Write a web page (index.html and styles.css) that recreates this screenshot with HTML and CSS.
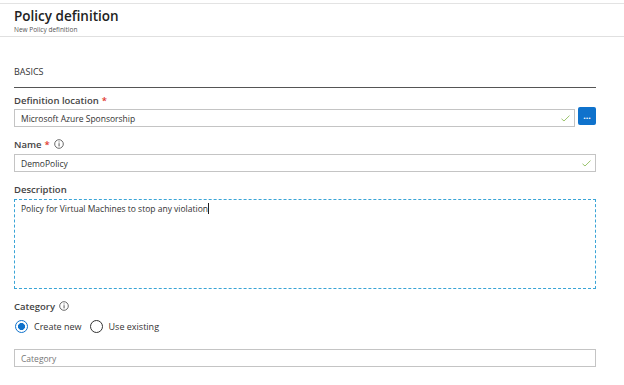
FILE: index.html
```html
<!DOCTYPE html>
<html lang="en">
<head>
  <meta charset="UTF-8">
  <meta name="viewport" content="width=device-width, initial-scale=1.0">
  <title>Policy definition</title>
  <link rel="stylesheet" href="styles.css">
</head>
<body>
  <!-- Cabeçalho -->
  <div class="header">
    <h1>Policy definition</h1>
    <p class="subtitle">New Policy definition</p>
  </div>

  <div class="form">
    <div class="section-title">BASICS</div>

    <!-- Local da definição -->
    <label class="label label-first">Definition location <span class="req">*</span></label>
    <div class="input-row">
      <div class="input input-short">
        <span>Microsoft Azure Sponsorship</span>
        <svg class="check" width="9" height="7" viewBox="0 0 9 7"><path d="M0.5 3.8 L3 6 L8.5 0.6" fill="none" stroke="#9cc46e" stroke-width="1"/></svg>
      </div>
      <button class="browse">...</button>
    </div>

    <!-- Nome -->
    <label class="label">Name <span class="req">*</span>
      <svg class="info" width="10" height="10" viewBox="0 0 10 10"><circle cx="5" cy="5" r="4.3" fill="none" stroke="#444" stroke-width="0.8"/><rect x="4.6" y="4.2" width="0.9" height="3.2" fill="#444"/><rect x="4.6" y="2.5" width="0.9" height="0.9" fill="#444"/></svg>
    </label>
    <div class="input">
      <span>DemoPolicy</span>
      <svg class="check" width="9" height="7" viewBox="0 0 9 7"><path d="M0.5 3.8 L3 6 L8.5 0.6" fill="none" stroke="#9cc46e" stroke-width="1"/></svg>
    </div>

    <!-- Descrição -->
    <label class="label">Description</label>
    <div class="textarea"><span>Policy for Virtual Machines to stop any violation</span><span class="caret"></span></div>

    <!-- Categoria -->
    <label class="label">Category
      <svg class="info" width="10" height="10" viewBox="0 0 10 10"><circle cx="5" cy="5" r="4.3" fill="none" stroke="#444" stroke-width="0.8"/><rect x="4.6" y="4.2" width="0.9" height="3.2" fill="#444"/><rect x="4.6" y="2.5" width="0.9" height="0.9" fill="#444"/></svg>
    </label>
    <div class="radios">
      <span class="radio selected"></span><span class="radio-text">Create new</span>
      <span class="radio"></span><span class="radio-text">Use existing</span>
    </div>
    <div class="input input-last">
      <span class="placeholder">Category</span>
    </div>
  </div>
</body>
</html>
```

FILE: styles.css
```css
body {
  margin: 0;
  font-family: "Open Sans", "Noto Sans", sans-serif;
  color: #333;
  background: #fff;
}
.header {
  margin-top: 3px;
  height: 32px;
  border-top: 1px solid #e3e3e3;
  border-bottom: 1px solid #e0e0e0;
  padding-left: 14px;
}
.header h1 {
  margin: 3px 0 0;
  font-size: 13.5px;
  line-height: 18px;
  font-weight: 600;
  color: #222;
}
.subtitle {
  margin: 1px 0 0;
  font-size: 6.5px;
  line-height: 8px;
  color: #555;
}
.form {
  padding-left: 14px;
  width: 582px;
}
.section-title {
  margin-top: 29px;
  font-size: 9px;
  line-height: 12px;
  padding-bottom: 9px;
  border-bottom: 1px solid #555;
  color: #333;
}
.label {
  display: flex;
  align-items: center;
  gap: 3px;
  margin-top: 10px;
  height: 14px;
  font-size: 9.5px;
  font-weight: 600;
  color: #444;
}
.label-first {
  margin-top: 5px;
}
.req {
  color: #e0362b;
}
.info {
  margin-left: 1px;
}
.input-row {
  display: flex;
  align-items: flex-start;
  margin-top: 2px;
}
.input {
  display: flex;
  align-items: center;
  justify-content: space-between;
  box-sizing: border-box;
  height: 18px;
  margin-top: 3px;
  padding: 0 4px 0 6px;
  border: 1px solid #c4c4c4;
  font-size: 8.5px;
  color: #333;
}
.input-row .input {
  margin-top: 0;
}
.input-short {
  width: 562px;
}
.input-last {
  margin-top: 16px;
}
.placeholder {
  color: #777;
}
.browse {
  margin: -2px 0 0 3px;
  width: 18px;
  height: 18px;
  padding: 0;
  border: none;
  border-radius: 2px;
  background-color: #0f72cc;
  color: #fff;
  font-size: 9px;
  font-weight: 700;
  line-height: 12px;
  font-family: inherit;
}
.textarea {
  box-sizing: border-box;
  height: 90px;
  margin-top: 3px;
  padding: 3px 6px;
  border: 1px dashed #3aa4d6;
  font-size: 8.5px;
  line-height: 12px;
  color: #333;
}
.caret {
  display: inline-block;
  width: 1px;
  height: 11px;
  background: #222;
  vertical-align: -2px;
}
.radios {
  display: flex;
  align-items: center;
  height: 14px;
  margin-top: 6px;
  font-size: 9px;
  color: #333;
}
.radio {
  box-sizing: border-box;
  width: 13px;
  height: 13px;
  margin-left: 1px;
  border: 1px solid #333;
  border-radius: 50%;
}
.radio.selected {
  border-color: #0f72cc;
  background: radial-gradient(circle, #0f72cc 0 3.2px, transparent 3.8px);
}
.radio-text {
  margin: 0 7px 0 6px;
}
```
